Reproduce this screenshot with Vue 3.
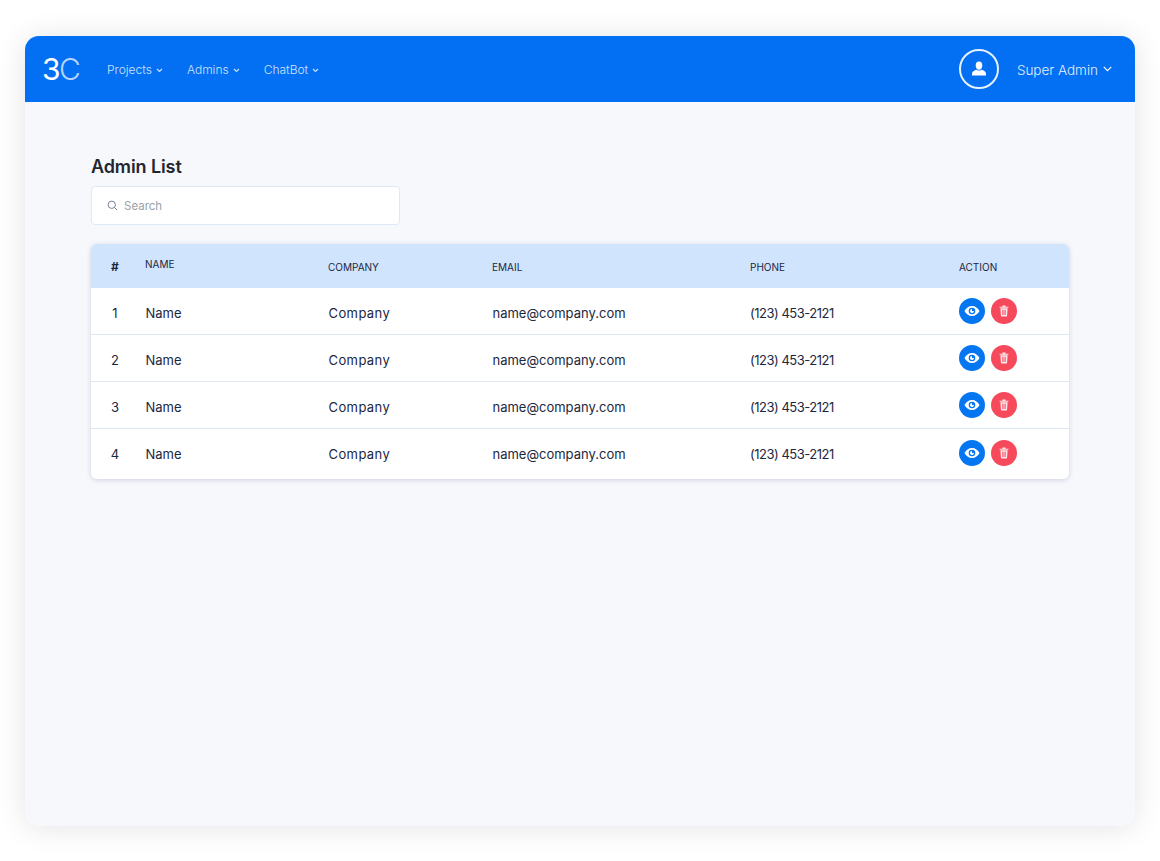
<script setup>
const navItems = ['Projects', 'Admins', 'ChatBot']
const columns = ['Company', 'Email', 'Phone', 'Action']
const rows = [1, 2, 3, 4].map((id) => ({
  id,
  name: 'Name',
  company: 'Company',
  email: 'name@company.com',
  phone: '(123) 453-2121',
}))
</script>

<template>
  <div class="page">
    <div class="frame">
      <header class="topbar">
        <div class="logo"><span class="logo-three">3</span><span class="logo-c">C</span></div>
        <nav class="nav">
          <a v-for="item in navItems" :key="item" class="nav-item">
            {{ item }}
            <svg class="chev-small" viewBox="0 0 8 6" width="7" height="5"><path d="M1 1.200 4 4.200 7 1.200" fill="none" stroke="currentColor" stroke-width="1.300" /></svg>
          </a>
        </nav>
        <div class="user">
          <div class="avatar">
            <svg viewBox="0 0 16 16" width="16" height="16"><path d="M8 0.600c2.100 0 3.300 1.600 3.300 3.800 0 2-1.200 4.300-3.300 4.300S4.700 6.400 4.700 4.400C4.700 2.200 5.900 0.600 8 0.600ZM5.500 8.700c1.400 1.200 3.600 1.200 5 0 2 .7 4 1.400 4.300 3.100l.3 2.600H.9l.3-2.600C1.500 10.100 3.500 9.400 5.500 8.700Z" fill="#fff" /></svg>
          </div>
          <span class="user-name">Super Admin</span>
          <svg class="chev" viewBox="0 0 12 8" width="9" height="6"><path d="M1 1.300 6 6.300 11 1.300" fill="none" stroke="currentColor" stroke-width="1.500" /></svg>
        </div>
      </header>
      <main class="content">
        <h1 class="title">Admin List</h1>
        <div class="search">
          <svg viewBox="0 0 12 12" width="11" height="11"><circle cx="5.200" cy="5.200" r="4" fill="none" stroke="#6f7785" stroke-width="1" /><path d="M8.200 8.200 11 11" stroke="#6f7785" stroke-width="1" /></svg>
          <span class="placeholder">Search</span>
        </div>
        <section class="table">
          <div class="row head">
            <span class="cell-id hash">#</span>
            <span class="head-name">NAME</span>
            <span v-for="col in columns" :key="col">{{ col.toUpperCase() }}</span>
          </div>
          <div v-for="row in rows" :key="row.id" class="row body">
            <span class="cell-id">{{ row.id }}</span>
            <span class="t">{{ row.name }}</span>
            <span class="t company">{{ row.company }}</span>
            <span class="t">{{ row.email }}</span>
            <span class="phone">{{ row.phone }}</span>
            <div class="actions">
              <button class="btn view" aria-label="View">
                <svg viewBox="0 0 16 12" width="16" height="12"><path fill-rule="evenodd" d="M8 1C4.700 1 2 3.100.5 6 2 8.900 4.700 11 8 11s6-2.100 7.500-5C14 3.100 11.300 1 8 1Zm0 8.300A3.300 3.300 0 1 1 8 2.700a3.300 3.300 0 0 1 0 6.600Z" fill="#fff" /><path d="M8 4a2 2 0 1 0 2 2H8V4Z" fill="#fff" /></svg>
              </button>
              <button class="btn del" aria-label="Delete">
                <svg viewBox="0 0 12 14" width="10" height="12"><path fill-rule="evenodd" d="M4.200 0.500h3.600v1.300H11.300v1.200H.7V1.800h3.500V.5ZM1.700 3.700h8.600l-.6 9.100c0 .4-.3.700-.7.700H3c-.4 0-.7-.3-.7-.7L1.700 3.700Zm2.300 1.700v6.300h.9V5.400H4Zm1.550 0v6.300h.9V5.400h-.9Zm1.550 0v6.300H8V5.400h-.9Z" fill="#fff" opacity=".88" /></svg>
              </button>
            </div>
          </div>
        </section>
      </main>
    </div>
  </div>
</template>

<style>
html, body { background: #fff; }
</style>

<style scoped>
* { box-sizing: border-box; }
.page {
  padding: 36px 25px 35px;
  font-family: "Inter", "Liberation Sans", sans-serif;
}
.frame {
  height: 790px;
  border-radius: 14px;
  background: #f6f8fc;
  box-shadow: 0 2px 30px rgba(0, 0, 0, 0.11);
  overflow: hidden;
  display: flex;
  flex-direction: column;
}
.topbar {
  height: 66px;
  flex: none;
  background: #0370f3;
  display: flex;
  align-items: center;
  color: #fff;
  padding-left: 17px;
  padding-right: 23px;
}
.logo {
  width: 65px;
  font-size: 30px;
  font-weight: 300;
  letter-spacing: -1.500px;
  line-height: 1;
}
.logo-three { font-weight: 400; }
.logo-c { color: #b5d4fb; }
.nav { display: flex; gap: 24px; }
.nav-item {
  display: flex;
  align-items: center;
  gap: 4px;
  font-size: 12px;
  font-weight: 300;
  color: #cfe2fc;
}
.chev-small { margin-top: 2px; }
.user { margin-left: auto; display: flex; align-items: center; }
.avatar {
  width: 40px;
  height: 40px;
  border: 2px solid rgba(255, 255, 255, 0.9);
  border-radius: 50%;
  display: flex;
  align-items: center;
  justify-content: center;
  margin-right: 18px;
}
.user-name {
  font-size: 13.500px;
  font-weight: 300;
  color: #e4effe;
  margin-right: 5px;
  margin-top: 1px;
}
.chev { color: #fff; }
.content { padding: 53px 66px 0; }
.title {
  margin: 0;
  font-size: 18px;
  line-height: 24px;
  font-weight: 600;
  color: #23262f;
  letter-spacing: -0.100px;
}
.search {
  margin-top: 7px;
  width: 309px;
  height: 39px;
  background: #fff;
  border: 1px solid #dfe8f5;
  border-radius: 4px;
  display: flex;
  align-items: center;
  gap: 6px;
  padding-left: 15px;
}
.placeholder { font-size: 11.500px; color: #9a9fa8; }
.table {
  margin-top: 19px;
  border-radius: 6px;
  background: #fff;
  box-shadow: 0 1px 5px rgba(40, 60, 100, 0.2);
  overflow: hidden;
}
.row {
  display: grid;
  grid-template-columns: 54px 183px 164px 258px 209px 110px;
  align-items: center;
  color: #1c2740;
}
.head {
  height: 44px;
  background: #d1e4fd;
  font-size: 10px;
  font-weight: 400;
  padding-top: 2px;
}
.head-name { margin-top: -6px; }
.hash { font-size: 12px; font-weight: 700; margin-top: -2px; }
.body {
  height: 47px;
  font-size: 13px;
  border-bottom: 1px solid #dfe8f2;
  padding-top: 3px;
}
.body:last-child { height: 50px; border-bottom: 0; padding-bottom: 3px; }
.body:last-child .actions { margin-top: -2px; }
.t { padding-left: 0.500px; }
.company { letter-spacing: 0.400px; }
.phone { letter-spacing: -0.500px; }
.cell-id { text-align: center; padding-right: 6px; }
.actions { display: flex; gap: 6px; margin-top: -3px; }
.btn {
  width: 26px;
  height: 26px;
  border: 0;
  border-radius: 50%;
  padding: 0;
  display: flex;
  align-items: center;
  justify-content: center;
}
.view { background: #0476f2; }
.del { background: #f6495b; }
</style>
